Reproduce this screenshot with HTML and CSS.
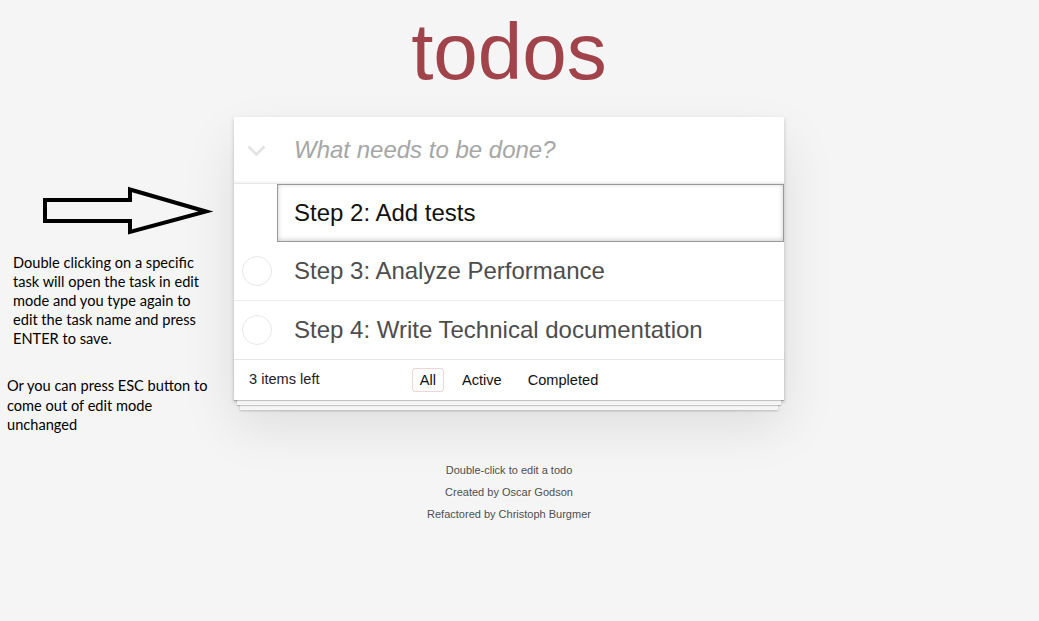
FILE: index.html
```html
<!DOCTYPE html>
<html lang="en">
<head>
<meta charset="utf-8">
<title>todos</title>
<link rel="stylesheet" href="styles.css">
</head>
<body>
<div class="page">
  <aside class="notes">
    <svg class="arrow" viewBox="0 183 234 56" width="234" height="56" aria-hidden="true">
      <polygon points="45,200 130,200 130,189.5 206,211.5 130,232 130,221 45,221"></polygon>
    </svg>
    <p class="note note-edit">Double clicking on a specific<br>task will open the task in edit<br>mode and you type again to<br>edit the task name and press<br>ENTER to save.</p>
    <p class="note note-esc">Or you can press ESC button to<br>come out of edit mode<br>unchanged</p>
  </aside>
  <main class="column">
    <h1 class="title">todos</h1>
    <section class="todoapp">
      <header class="header">
        <span class="toggle-all">
          <svg width="19" height="12" viewBox="0 0 19 12" aria-hidden="true"><polyline points="1.5,1.5 9.5,9.5 17.5,1.5"></polyline></svg>
        </span>
        <div class="new-todo">What needs to be done?</div>
      </header>
      <ul class="todo-list">
        <li class="editing"><div class="edit">Step 2: Add tests</div></li>
        <li class="item"><span class="toggle"></span><span class="label">Step 3: Analyze Performance</span></li>
        <li class="item"><span class="toggle"></span><span class="label">Step 4: Write Technical documentation</span></li>
      </ul>
      <footer class="footer">
        <span class="todo-count">3 items left</span>
        <ul class="filters">
          <li><a class="selected">All</a></li>
          <li><a>Active</a></li>
          <li><a>Completed</a></li>
        </ul>
        <span class="spacer"></span>
      </footer>
    </section>
    <footer class="info">
      <p>Double-click to edit a todo</p>
      <p>Created by <a>Oscar Godson</a></p>
      <p>Refactored by <a>Christoph Burgmer</a></p>
    </footer>
  </main>
</div>
</body>
</html>
```
FILE: styles.css
```css
html, body {
  margin: 0;
  padding: 0;
}

body {
  background: #f5f5f5;
  color: #111111;
  font-family: "Liberation Sans", Arial, sans-serif;
  font-size: 14px;
  line-height: 1.4em;
}

.page {
  display: flex;
  align-items: flex-start;
}

/* annotation column */
.notes {
  width: 234px;
  flex-shrink: 0;
  color: #000;
  font-family: Lato, "Open Sans", sans-serif;
  font-size: 14.6px;
}

.arrow {
  display: block;
  margin-top: 183px;
}

.arrow polygon {
  fill: none;
  stroke: #000;
  stroke-width: 4;
  stroke-linejoin: miter;
  stroke-miterlimit: 6;
}

.note {
  margin: 0;
  white-space: nowrap;
}

.note-edit {
  margin-top: 14px;
  padding-left: 13px;
  line-height: 19px;
}

.note-esc {
  margin-top: 28px;
  padding-left: 7px;
  line-height: 19.5px;
}

/* app column */
.column {
  width: 550px;
  flex-shrink: 0;
}

.title {
  margin: 12px 0 25px;
  height: 80px;
  font-size: 80px;
  line-height: 80px;
  font-weight: normal;
  text-align: center;
  color: #a1434a;
}

.todoapp {
  position: relative;
  background: #fff;
  box-shadow: 0 2px 4px 0 rgba(0, 0, 0, 0.2),
              0 25px 50px 0 rgba(0, 0, 0, 0.1);
}

.header {
  display: flex;
  align-items: center;
  box-shadow: inset 0 -2px 1px rgba(0, 0, 0, 0.03);
}

.toggle-all {
  width: 60px;
  flex-shrink: 0;
  box-sizing: border-box;
  padding-left: 13px;
  padding-top: 3px;
  display: flex;
  align-items: center;
}

.toggle-all svg {
  display: block;
}

.toggle-all polyline {
  fill: none;
  stroke: #e3e3e3;
  stroke-width: 2.6;
  stroke-linecap: butt;
}

.new-todo {
  flex: 1;
  padding: 16px 16px 16px 0;
  font-size: 24px;
  line-height: 33.6px;
  font-style: italic;
  color: #a6a6a6;
}

.todo-list {
  margin: 0;
  padding: 0;
  list-style: none;
  border-top: 1px solid #e6e6e6;
}

.todo-list .editing {
  padding: 0;
}

.edit {
  box-sizing: border-box;
  width: calc(100% - 43px);
  margin-left: 43px;
  padding: 12px 16px;
  font-size: 24px;
  line-height: 32px;
  color: #111;
  border: 1px solid #999;
  box-shadow: inset 0 -1px 5px 0 rgba(0, 0, 0, 0.2);
}

.item {
  display: flex;
  align-items: center;
  border-bottom: 1px solid #ededed;
}

.item:last-child {
  border-bottom: none;
}

.toggle {
  width: 30px;
  height: 30px;
  box-sizing: border-box;
  flex-shrink: 0;
  margin: 0 22px 0 8px;
  border: 1px solid #e8e8e8;
  border-radius: 50%;
}

.label {
  flex: 1;
  padding: 15px 15px 15px 0;
  font-size: 24px;
  line-height: 28px;
  color: #4d4d4d;
}

.footer {
  position: relative;
  display: grid;
  grid-template-columns: 1fr auto 1fr;
  align-items: center;
  height: 40px;
  padding: 0 15px;
  border-top: 1px solid #e6e6e6;
  color: #222;
  font-size: 14.6px;
}

.footer::before {
  content: '';
  position: absolute;
  right: 0;
  bottom: 0;
  left: 0;
  height: 50px;
  overflow: hidden;
  pointer-events: none;
  box-shadow: 0 1px 1px rgba(0, 0, 0, 0.2),
              0 8px 0 -3px #f6f6f6,
              0 9px 1px -3px rgba(0, 0, 0, 0.2),
              0 16px 0 -6px #f6f6f6,
              0 17px 2px -6px rgba(0, 0, 0, 0.2);
}

.todo-count {
  text-align: left;
}

.filters {
  display: flex;
  gap: 4px;
  margin: 0;
  padding: 0;
  list-style: none;
}

.filters a {
  display: block;
  margin: 3px;
  padding: 3px 7px;
  line-height: 16px;
  color: #111;
  border: 1px solid transparent;
  border-radius: 3px;
}

.filters a.selected {
  border-color: rgba(175, 47, 47, 0.2);
}

.info {
  margin-top: 65px;
  text-align: center;
  font-size: 11px;
  color: #4d4d4d;
  text-shadow: 0 1px 0 rgba(255, 255, 255, 0.5);
}

.info p {
  margin: 11px 0;
  line-height: 1;
}

.info a {
  color: inherit;
  text-decoration: none;
}
```
